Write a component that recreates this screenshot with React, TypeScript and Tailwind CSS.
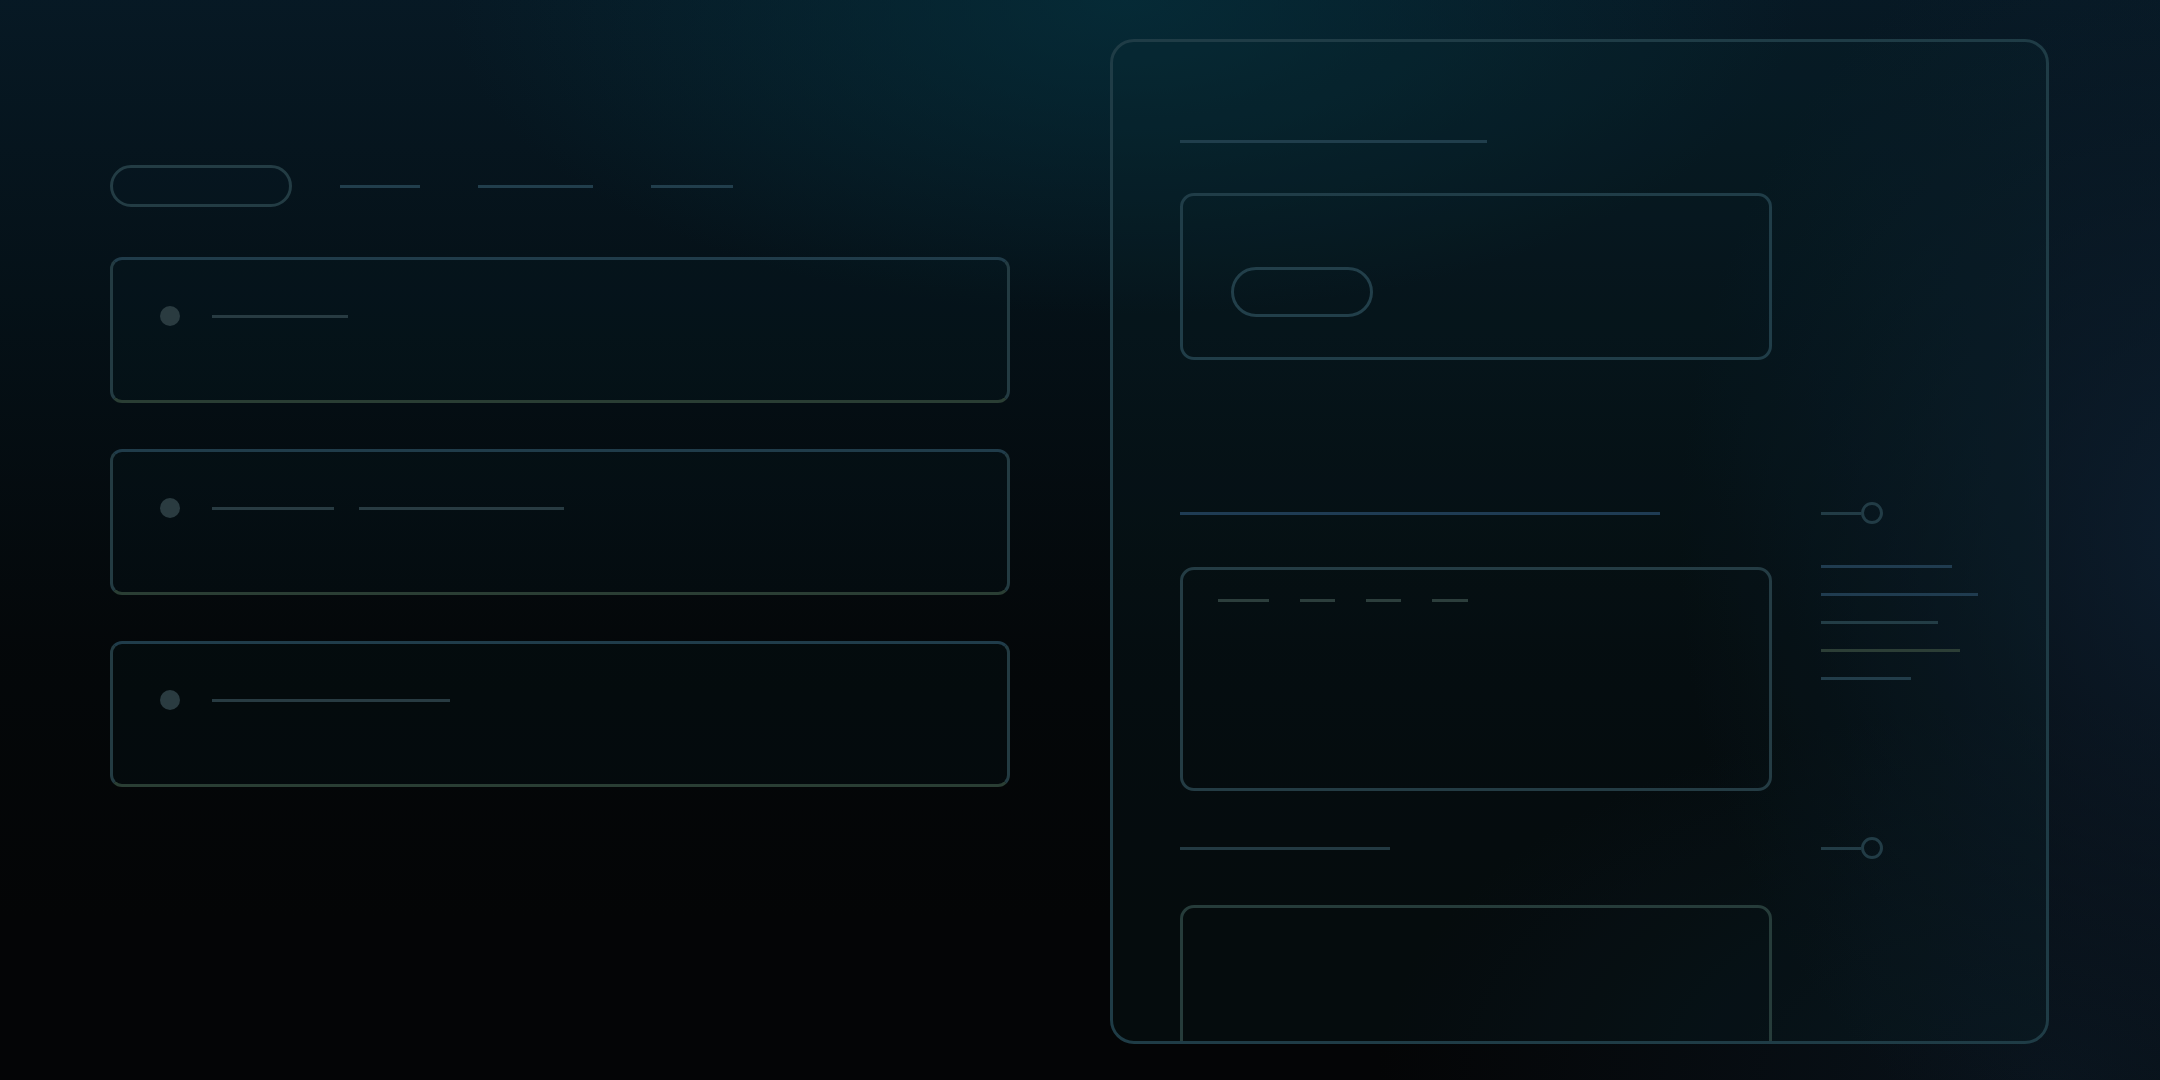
import React from "react";

function Knob() {
  return (
    <div className="flex items-center">
      <div className="h-[3px] w-[40px] bg-[#223c46]" />
      <div className="h-[22px] w-[22px] rounded-full border-[3px] border-[#223c46]" />
    </div>
  );
}

function Card({ lines }: { lines: number[] }) {
  return (
    <div className="h-[146px] w-[900px] rounded-[12px] border-[3px] border-[#233b42] border-t-[#203c4a] border-b-[#2a3e34] bg-[#0c2a30]/[0.12] pl-[47px] pt-[46px]">
      <div className="flex items-center">
        <div className="h-[20px] w-[20px] rounded-full bg-[#2a3b40]" />
        <div className="ml-[32px] flex items-center gap-[25px]">
          {lines.map((w, i) => (
            <div key={i} className="h-[3px] bg-[#283b42]" style={{ width: w }} />
          ))}
        </div>
      </div>
    </div>
  );
}

export default function App() {
  return (
    <div className="relative flex h-[1080px] w-[2160px] overflow-hidden bg-[#040506] bg-[radial-gradient(ellipse_900px_420px_at_52%_0%,rgba(5,48,60,0.75),transparent_75%),radial-gradient(ellipse_700px_900px_at_102%_50%,rgba(14,32,50,0.85),transparent_75%),radial-gradient(ellipse_900px_500px_at_95%_100%,rgba(10,22,32,0.8),transparent_75%),linear-gradient(180deg,rgba(7,26,38,0.95)_0%,rgba(5,20,28,0.75)_30%,rgba(4,12,16,0.35)_60%,transparent_85%)]">
      {/* Left column */}
      <div className="ml-[110px] mt-[165px] flex w-[900px] shrink-0 flex-col">
        <div className="flex items-center">
          <div className="h-[42px] w-[182px] rounded-full border-[3px] border-[#233c44] bg-[#0c2a30]/[0.1]" />
          <div className="ml-[48px] flex items-center gap-[58px]">
            <div className="h-[3px] w-[80px] bg-[#213e4c]" />
            <div className="h-[3px] w-[115px] bg-[#213e4c]" />
            <div className="h-[3px] w-[82px] bg-[#213e4c]" />
          </div>
        </div>
        <div className="mt-[50px] flex flex-col gap-[46px]">
          <Card lines={[136]} />
          <Card lines={[122, 205]} />
          <Card lines={[238]} />
        </div>
      </div>

      {/* Right panel */}
      <div className="ml-[100px] mt-[39px] h-[1005px] w-[939px] shrink-0 overflow-hidden rounded-[24px] border-[3px] border-[#1f3c46] bg-[#0a2a34]/[0.18] pl-[67px] pt-[98px]">
        <div className="h-[3px] w-[307px] bg-[#203e4c]" />

        <div className="mt-[50px] h-[167px] w-[592px] rounded-[14px] border-[3px] border-[#203d48] pl-[48px] pt-[71px]">
          <div className="h-[50px] w-[142px] rounded-full border-[3px] border-[#223f4a]" />
        </div>

        <div className="mt-[142px] flex items-center gap-[49px]">
          <div className="flex w-[592px] shrink-0 items-center">
            <div className="h-[3px] w-[480px] bg-[#1f3c54]" />
          </div>
          <Knob />
        </div>

        <div className="mt-[43px] flex items-start gap-[49px]">
          <div className="h-[224px] w-[592px] shrink-0 rounded-[14px] border-[3px] border-[#243c44] pl-[35px] pt-[29px]">
            <div className="flex items-center gap-[31px]">
              <div className="h-[3px] w-[51px] bg-[#2c3e3c]" />
              <div className="h-[3px] w-[35px] bg-[#2c3e3c]" />
              <div className="h-[3px] w-[35px] bg-[#2c3e3c]" />
              <div className="h-[3px] w-[36px] bg-[#2c3e3c]" />
            </div>
          </div>
          <div className="-mt-[2px] flex flex-col gap-[25px]">
            <div className="h-[3px] w-[131px] bg-[#203c50]" />
            <div className="h-[3px] w-[157px] bg-[#203c50]" />
            <div className="h-[3px] w-[117px] bg-[#233d46]" />
            <div className="h-[3px] w-[139px] bg-[#2c3e36]" />
            <div className="h-[3px] w-[90px] bg-[#223d4a]" />
          </div>
        </div>

        <div className="mt-[46px] flex items-center gap-[49px]">
          <div className="flex w-[592px] shrink-0 items-center">
            <div className="h-[3px] w-[210px] bg-[#233a42]" />
          </div>
          <Knob />
        </div>

        <div className="mt-[46px] h-[300px] w-[592px] rounded-[14px] border-[3px] border-[#263c3a]" />
      </div>
    </div>
  );
}
